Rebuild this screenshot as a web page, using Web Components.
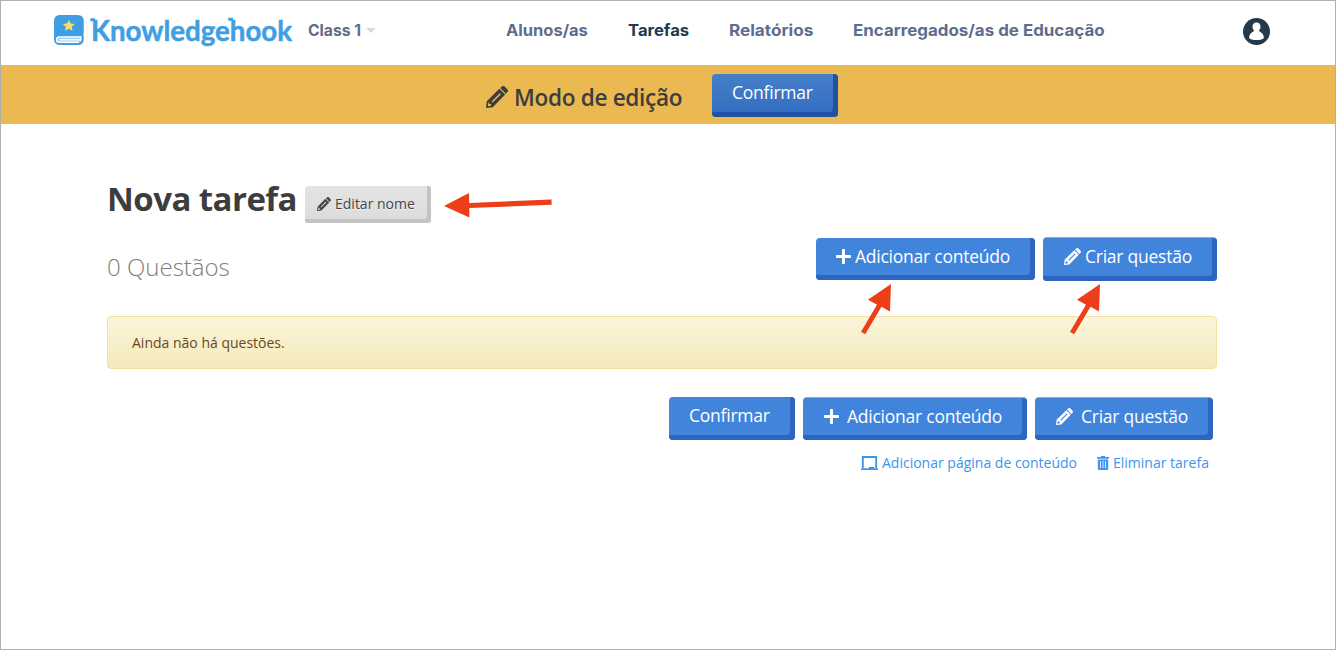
<!DOCTYPE html>
<html lang="pt"><head><meta charset="utf-8"><title>Nova tarefa</title>
<style>body{margin:0;background:#fff;font-family:"Open Sans",sans-serif}</style></head><body>
<task-page></task-page>
<script>
const define=(name,html)=>customElements.define(name,class extends HTMLElement{
  constructor(){super();this.attachShadow({mode:'open'}).innerHTML=html}
});
define('icon-pencil',`<style>:host{display:block;width:var(--s,18px);height:var(--s,18px)}svg{display:block;width:100%;height:100%}</style>
<svg viewBox="0 0 22 22" fill="currentColor"><path fill-rule="evenodd" d="M0 22 .8 15.2 13.3 2.8 19.2 8.6 6.8 21.2ZM1.8 20.3 4.9 19.8 5 18 3.3 17.9 3.1 16.3 2.4 16.6ZM5.5 15.6 6.6 16.6 14.9 8.2 13.8 7.2Z"/><path d="M14.2 2 15.9.5Q17.2-.6 18.5.5L21.4 3.4Q22.6 4.8 21.4 6.1L19.9 7.7Z"/></svg>`);
define('icon-plus',`<style>:host{display:block;width:15px;height:15px}svg{display:block}</style><svg width="15" height="15" viewBox="0 0 15 15" fill="currentColor"><path d="M6 .8Q6 0 6.8 0H8.2Q9 0 9 .8V6h5.2q.8 0 .8.8v1.4q0 .8-.8.8H9v5.2q0 .8-.8.8H6.8q-.8 0-.8-.8V9H.8Q0 9 0 8.2V6.8Q0 6 .8 6H6Z"/></svg>`);
define('kh-logo',`<style>:host{display:flex;align-items:flex-start;color:#409fe3;width:241px}svg{display:block;flex:none;overflow:visible}.mark{margin-top:0}.word{margin:-5px 0 0 5px}</style>
<svg class="mark" width="32" height="32" viewBox="0 0 32 32"><rect x="1" y="0" width="29.7" height="30" rx="5.5" fill="#409fe3"/><path d="M31 19Q29.5 21.3 27 21.3H6Q2.8 21.3 2.8 24.8 2.8 28 6 28H26Q29.2 28 29.2 24V21.5L31 20Z" fill="#fff"/><path d="M29.4 20V24Q29.4 27.8 26 27.8" fill="none" stroke="#409fe3" stroke-width="1.6"/><path d="M6 22.7H26.8V26.6H6Q4.4 26.6 4.4 24.7 4.4 22.7 6 22.7Z" fill="#8cc6ef"/><path d="M5.8 24.7H26.8" stroke="#fff" stroke-width="1.7"/><path d="M15.8 4.9 17.6 8.5 21.8 9 18.7 11.8 19.5 15.8 15.8 13.8 12.1 15.8 12.9 11.8 9.8 9 14 8.5Z" fill="#fbdf62"/></svg>
<svg class="word" width="204" height="44" viewBox="0 0 204 44"><path d="M.4 9.8H5M138.3 9.3H143" stroke="#409fe3" stroke-width="3"/><text x="1" y="30.5" textLength="201" lengthAdjust="spacingAndGlyphs" font-family="Lato" font-weight="700" font-size="28.5" fill="#409fe3" stroke="#409fe3" stroke-width=".5">Knowledgehook</text></svg>`);
define('nav-link',`<style>:host{display:block;flex:none;color:#5e6c8e;width:var(--w);height:28px}:host([active]){color:#26394a}span{display:inline-block;font:750 16px/28px Inter,sans-serif;white-space:nowrap;transform:scaleX(var(--k,1));transform-origin:0 0}</style><span><slot></slot></span>`);
define('top-bar',`<style>:host{display:flex;height:64px;align-items:flex-start;padding:14px 0 0 52px;box-sizing:border-box}.nav{display:flex;gap:40px;margin:1px 0 0 130px}.class{display:flex;margin:1px 0 0 14px;gap:4px}.caret{margin-top:12px;width:0;height:0;border:5px solid transparent;border-top-color:#cfdde3;border-bottom:0}.user{margin:2.5px 0 0 137px}</style>
<kh-logo></kh-logo><div class="class"><nav-link style="--w:54px;--k:.98">Class 1</nav-link><i class="caret"></i></div>
<div class="nav"><nav-link style="--w:82px;--k:1.03">Alunos/as</nav-link><nav-link active style="--w:60.5px;--k:1.04">Tarefas</nav-link><nav-link style="--w:84px;--k:1.07">Relatórios</nav-link><nav-link style="--w:253px;--k:1.057">Encarregados/as de Educação</nav-link></div>
<svg class="user" width="27" height="27" viewBox="0 0 27 27"><circle cx="13.5" cy="13.5" r="13.5" fill="#26394a"/><path d="M13.5 4.5C10.8 4.5 9.4 6.5 9.5 8.7 9.6 10.6 10.3 11.7 11.2 12.5 10.9 13.7 6.1 14.5 6.1 20Q8 22 13.5 22T20.9 20C20.9 14.5 16.1 13.7 15.8 12.5 16.7 11.7 17.4 10.6 17.5 8.7 17.6 6.5 16.2 4.5 13.5 4.5Z" fill="#fff"/></svg>`);
define('push-button',`<style>:host{display:flex;box-sizing:border-box;flex:none;width:var(--w);height:var(--h,43px);padding:var(--pt,6px) 0 0 var(--pl,20px);gap:var(--g,4px);background:#4184dc;box-shadow:inset -5px -5px #2d65c0;border-radius:4px;color:#fff;font:17.5px/25px "Open Sans",sans-serif;letter-spacing:-.24px;white-space:nowrap}:host([deep]){background:linear-gradient(#4680c9,#316bc0);box-shadow:inset -5px -5px #2152a2}:host([gray]){background:linear-gradient(#e3e3e3,#dcdcdc);box-shadow:inset -4px -4px #c3c3c3;color:#444;font-size:14px;letter-spacing:0;line-height:24px;padding-left:12px;text-shadow:0 1px #f4f4f4;border-radius:3px}:host([edge]){border-top:1px solid #9caabd}::slotted(icon-plus){margin-top:5px}::slotted(icon-pencil){margin-top:4px}</style><slot></slot>`);
define('edit-banner',`<style>:host{display:flex;height:59px;margin:0 -1px;background:#eab952;align-items:flex-start;box-sizing:border-box;padding:9px 0 0 486px;border:solid #b39045;border-width:0 1px;color:#3d3d3d}icon-pencil{--s:22px;margin:12px 6px 0 -1px}span{width:198px;font:600 22.6px/47px "Open Sans";letter-spacing:-.33px;white-space:nowrap}</style>
<icon-pencil></icon-pencil><span>Modo de edição</span><push-button deep style="--w:126px">Confirmar</push-button>`);
define('pointer-arrow',`<style>:host{position:absolute;display:block;left:var(--x);top:var(--y)}svg{display:block;overflow:visible}:host([side]) .up,:host(:not([side])) .left{display:none}</style>
<svg class="left" width="108" height="26" viewBox="0 0 108 26" fill="#eb3e19"><path d="M0 13 25 0 25.2 10 107.5 6.5 107.7 11.7 25.3 15.1 25.4 24.5Z"/></svg><svg class="up" width="31" height="51" viewBox="0 0 31 51" fill="#eb3e19"><path d="M30 0 7 15.7 16 20.7 0 47.8 4.2 50.3 20.5 22.8 29 27.5Z"/></svg>`);
define('notice-box',`<style>:host{display:block;box-sizing:border-box;height:53px;border:1px solid #f2e197;border-radius:4px;background:linear-gradient(#faf5dc,#f5eaba);padding:13px 24px;font:14px/25px "Open Sans";color:#6a491f}</style><slot></slot>`);
define('text-link',`<style>:host{display:flex;gap:4px;font:14px/20px "Open Sans";color:#3c94ee;white-space:nowrap;width:var(--w)}::slotted(svg){flex:none;margin-top:3px}</style><slot></slot>`);
define('task-page',`<style>:host{display:block;position:relative;box-sizing:border-box;height:650px;border:1px solid #b0b0b0;overflow:hidden}main{width:1110px;margin:0 0 0 106px}.title{display:flex;height:46px;padding-top:52px;align-items:flex-start}h1{width:198px;margin:0;font:700 33px/46px "Open Sans";letter-spacing:-.55px;color:#3d3d3d;white-space:nowrap}.title push-button{margin-top:10px}.count{display:flex;height:94px;padding-top:15px;box-sizing:border-box}h2{margin:12px 0 0;width:709px;font:300 24px/36px "Open Sans";color:#808080}.count push-button{margin-right:8px}.actions{display:flex;gap:8px;padding:28px 0 0 562px}.links{display:flex;padding:13px 0 0 754px;gap:20px}</style>
<top-bar></top-bar><edit-banner></edit-banner>
<main><div class="title"><h1>Nova tarefa</h1><push-button gray style="--w:126px;--h:37px;--g:4px"><icon-pencil style="--s:14px;margin-top:5px"></icon-pencil>Editar nome</push-button></div>
<div class="count"><h2>0 Questãos</h2><push-button style="--w:219px;--h:42px;margin-top:1px"><icon-plus></icon-plus>Adicionar conteúdo</push-button><push-button edge style="--w:174px;--h:44px;--pl:21px;margin-right:0"><icon-pencil style="--s:17px"></icon-pencil>Criar questão</push-button></div>
<notice-box>Ainda não há questões.</notice-box>
<div class="actions"><push-button style="--w:126px">Confirmar</push-button><push-button edge style="--w:224px;--g:8px;--pl:21px"><icon-plus></icon-plus>Adicionar conteúdo</push-button><push-button edge style="--w:178px;--g:8px;--pl:21px"><icon-pencil style="--s:17px"></icon-pencil>Criar questão</push-button></div>
<div class="links"><text-link style="--w:216px"><svg width="17" height="14" viewBox="0 0 17 14"><path d="M1.8 12V1H15.2V12" fill="none" stroke="currentColor" stroke-width="1.9"/><path d="M0 12.2H8V11H13V12.2H17V14H0Z" fill="currentColor"/></svg>Adicionar página de conteúdo</text-link><text-link><svg width="12" height="14" viewBox="0 0 12 14"><path d="M0 1H4V0H8V1H12V2.8H0Z" fill="currentColor"/><path fill="currentColor" fill-rule="evenodd" d="M.8 3.6H11.2V12.8Q11.2 14 10 14H2Q.8 14 .8 12.8ZM3 5V12.3H3.8V5ZM5.6 5V12.3H6.4V5ZM8.2 5V12.3H9V5Z"/></svg>Eliminar tarefa</text-link></div></main>
<pointer-arrow side style="--x:443px;--y:192px"></pointer-arrow><pointer-arrow style="--x:860px;--y:283px"></pointer-arrow><pointer-arrow style="--x:1069px;--y:283px"></pointer-arrow>`);
</script></body></html>
